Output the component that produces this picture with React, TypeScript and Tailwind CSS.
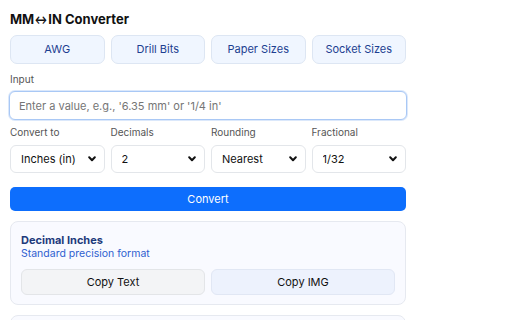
import React from "react";

const Chevron = () => (
  <svg className="pointer-events-none absolute right-[9px] top-1/2 -translate-y-1/2" width="8" height="6" viewBox="0 0 8 6">
    <path d="M1.2 1.3 L4 4.2 L6.8 1.3" fill="none" stroke="#111" strokeWidth="2" strokeLinecap="round" strokeLinejoin="round" />
  </svg>
);

function Sel({ label, value }: { label: string; value: string }) {
  return (
    <div className="flex flex-col">
      <div className="text-[10px] text-[#555] h-[16px] leading-[16px] mb-[5px]">{label}</div>
      <div className="relative">
        <select
          defaultValue={value}
          className="appearance-none w-full h-[28px] rounded-[6px] border border-[#e3e6ea] bg-white pl-[10px] pr-[20px] text-[11px] text-[#111] outline-none"
        >
          <option>{value}</option>
        </select>
        <Chevron />
      </div>
    </div>
  );
}

export default function App() {
  return (
    <div className="w-[512px] h-[320px] overflow-hidden bg-white" style={{ fontFamily: "Inter, 'Noto Sans', sans-serif" }}>
      <div className="w-[396px] ml-[10px] pt-[10px]">
        <h1 className="text-[13px] font-bold text-[#111] leading-[18px]">
          MM<span className="text-[12px] inline-block scale-x-[0.8] -mx-[1px]">↔</span>IN Converter
        </h1>
        <div className="grid grid-cols-4 gap-[6px] mt-[6px]">
          {["AWG", "Drill Bits", "Paper Sizes", "Socket Sizes"].map((t) => (
            <button key={t} className="h-[29px] rounded-[7px] border border-[#dde6f3] bg-[#f0f6ff] text-[11px] text-[#1d3f91]">
              {t}
            </button>
          ))}
        </div>
        <div className="text-[10px] text-[#555] h-[16px] leading-[16px] mt-[7px]">Input</div>
        <div className="mt-[4px] -mx-[1px]">
          <input
            placeholder="Enter a value, e.g., '6.35 mm' or '1/4 in'"
            className="w-full h-[29px] rounded-[6px] border-[1.5px] border-[#a9c8f5] shadow-[0_0_0_1px_#dbe8fb] bg-white px-[9px] text-[11px] text-[#111] placeholder:text-[#757575] outline-none"
          />
        </div>
        <div className="grid grid-cols-4 gap-[6px] mt-[4px]">
          <Sel label="Convert to" value="Inches (in)" />
          <Sel label="Decimals" value="2" />
          <Sel label="Rounding" value="Nearest" />
          <Sel label="Fractional" value="1/32" />
        </div>
        <button className="w-full h-[24px] mt-[14px] rounded-[5px] bg-[#0d6efd] text-white text-[11px]">Convert</button>
        <div className="mt-[10px] rounded-[8px] border border-[#e6e9f0] bg-[#f9faff] px-[10px] pt-[11px] pb-[9px]">
          <div className="text-[11px] font-bold text-[#1e3a7b] leading-[14px]">Decimal Inches</div>
          <div className="text-[10.5px] text-[#2f5fd0] leading-[13px]">Standard precision format</div>
          <div className="grid grid-cols-2 gap-[6px] mt-[9px]">
            <button className="h-[26px] rounded-[6px] border border-[#e3e5e8] bg-[#f3f4f6] text-[11px] text-[#111]">Copy Text</button>
            <button className="h-[26px] rounded-[6px] border border-[#e1e7f4] bg-[#edf2fd] text-[11px] text-[#111]">Copy IMG</button>
          </div>
        </div>
        <div className="mt-[10px] h-[40px] rounded-[8px] border border-[#e6e9f0] bg-[#f9faff]" />
      </div>
    </div>
  );
}
